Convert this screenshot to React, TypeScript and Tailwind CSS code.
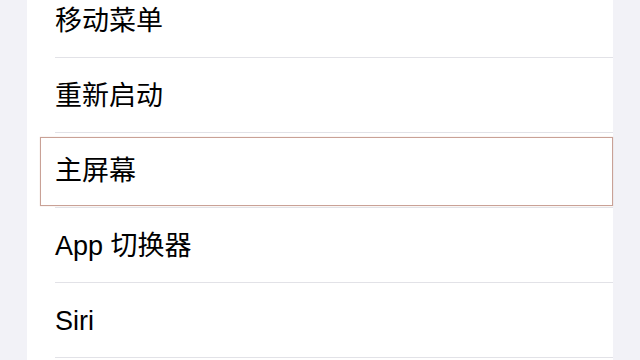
import React from 'react';

const items = ['移动菜单', '重新启动', '主屏幕', 'App 切换器', 'Siri'];

const App: React.FC = () => {
  return (
    <div
      className="w-[640px] h-[360px] overflow-hidden bg-[#f2f2f7] pl-[27px] pr-[27px]"
      style={{ fontFamily: '"Liberation Sans", "Noto Sans CJK SC", sans-serif' }}
    >
      <div className="mt-[-17px] bg-white flex flex-col">
        {items.map((label, i) => (
          <div key={label} className="relative h-[75px] pl-[28px]">
            <div className="h-full flex items-center pt-[2px] border-b border-[#e2e2e7]">
              <span className="text-[27px] leading-none text-black">{label}</span>
            </div>
            {i === 2 && (
              <div className="absolute top-[4px] left-[13px] right-0 h-[69px] border border-[#c9a196] shadow-[0_0_1px_rgba(180,120,100,0.4)] pointer-events-none" />
            )}
          </div>
        ))}
        <div className="h-[20px]" />
      </div>
    </div>
  );
};

export default App;
